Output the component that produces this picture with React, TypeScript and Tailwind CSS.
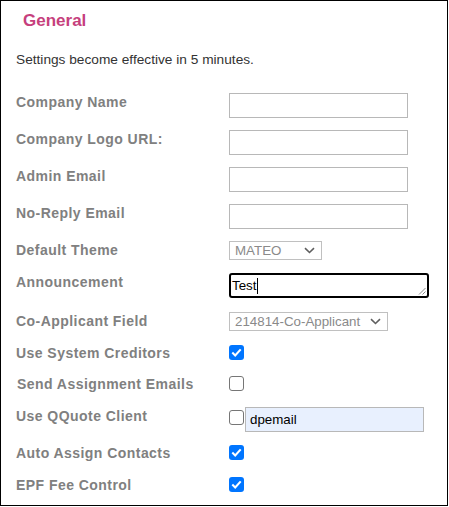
import React from "react";

const FONT = { fontFamily: '"Liberation Sans", Arial, sans-serif' };

function TextBox({ value, autofill }: { value?: string; autofill?: boolean }) {
  return (
    <div
      className={`flex h-[25px] w-[179px] items-center border border-[#b8b8b8] px-[4px] text-[13.33px] text-black ${
        autofill ? "bg-[#e8f0fe]" : "bg-white"
      }`}
    >
      {value}
    </div>
  );
}

function Chevron() {
  return (
    <svg width="11" height="7" viewBox="0 0 11 7" fill="none" className="shrink-0">
      <path d="M1 1.2l4.5 4.3L10 1.2" stroke="#5f5f5f" strokeWidth="1.6" />
    </svg>
  );
}

function SelectBox({ value, width }: { value: string; width: string }) {
  return (
    <div
      className={`flex h-[19px] ${width} items-center justify-between border border-[#c0c0c0] bg-white pr-[6px] pl-[5px] text-[13.33px] leading-none text-[#8a8a8a]`}
    >
      <span>{value}</span>
      <Chevron />
    </div>
  );
}

function Check({ checked }: { checked?: boolean }) {
  if (checked) {
    return (
      <div className="mt-[1px] flex h-[15px] w-[15px] items-center justify-center rounded-[3px] bg-[#0075ff]">
        <svg width="11" height="9" viewBox="0 0 11 9" fill="none">
          <path d="M1.3 4.6l2.9 2.8L9.7 1.4" stroke="white" strokeWidth="2.1" />
        </svg>
      </div>
    );
  }
  return <div className="mt-[1px] h-[15px] w-[15px] rounded-[3px] border border-[#767676] bg-white" />;
}

function Row({
  label,
  height,
  indent,
  children,
}: {
  label: string;
  height: string;
  indent?: boolean;
  children: React.ReactNode;
}) {
  return (
    <div className={`flex items-start ${height}`}>
      <div
        className={`w-[228px] shrink-0 text-[14px] leading-[18px] font-bold tracking-[0.45px] text-[#808080] ${
          indent ? "pl-[16px]" : "pl-[15px]"
        }`}
      >
        {label}
      </div>
      <div className="flex items-start">{children}</div>
    </div>
  );
}

export default function App() {
  return (
    <div style={FONT} className="h-[506px] w-[448px] border border-black bg-white">
      <h2 className="pt-[10px] pl-[22px] text-[17px] leading-[20px] font-bold text-[#c63f7d]">General</h2>
      <p className="mt-[21px] pl-[15px] text-[13.7px] leading-[16px] text-[#333]">
        Settings become effective in 5 minutes.
      </p>

      <div className="mt-[25px] flex flex-col">
        <Row label="Company Name" height="h-[37px]">
          <TextBox />
        </Row>
        <Row label="Company Logo URL:" height="h-[37px]">
          <TextBox />
        </Row>
        <Row label="Admin Email" height="h-[37px]">
          <TextBox />
        </Row>
        <Row label="No-Reply Email" height="h-[37px]">
          <TextBox />
        </Row>
        <Row label="Default Theme" height="h-[32px]">
          <SelectBox value="MATEO" width="w-[93px]" />
        </Row>
        <Row label="Announcement" height="h-[39px]">
          <div className="relative flex h-[25px] w-[200px] items-center rounded-[3px] border-2 border-black bg-white pl-[1px] text-[13.33px] text-black">
            <span>Test</span>
            <span className="ml-[1px] h-[16px] w-px bg-black" />
            <svg
              width="8"
              height="8"
              viewBox="0 0 8 8"
              className="absolute right-[1px] bottom-[1px]"
              fill="none"
            >
              <path d="M7.5 1L1 7.5M7.5 4.5L4.5 7.5" stroke="#8a8a8a" strokeWidth="1" />
            </svg>
          </div>
        </Row>
        <Row label="Co-Applicant Field" height="h-[32px]">
          <SelectBox value="214814-Co-Applicant" width="w-[159px]" />
        </Row>
        <Row label="Use System Creditors" height="h-[31px]">
          <Check checked />
        </Row>
        <Row label="Send Assignment Emails" height="h-[32px]" indent>
          <Check />
        </Row>
        <Row label="Use QQuote Client" height="h-[37px]">
          <div className="mt-[2px]">
            <Check />
          </div>
          <div className="ml-[1px]">
            <TextBox value="dpemail" autofill />
          </div>
        </Row>
        <Row label="Auto Assign Contacts" height="h-[32px]">
          <Check checked />
        </Row>
        <Row label="EPF Fee Control" height="h-[30px]">
          <Check checked />
        </Row>
      </div>
    </div>
  );
}
